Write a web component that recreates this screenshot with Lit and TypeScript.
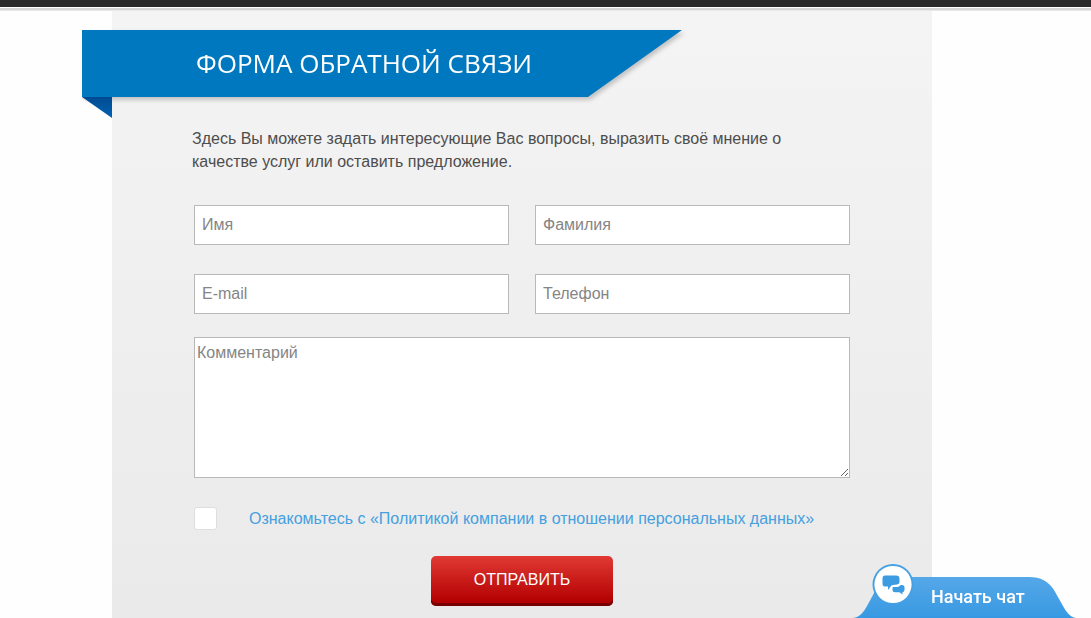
import { LitElement, html, css } from "lit";
import { customElement, state } from "lit/decorators.js";

@customElement("ribbon-title")
class RibbonTitle extends LitElement {
  static styles = css`
    :host {
      display: block;
    }
    .ribbon {
      width: 600px;
      max-width: 100%;
      filter: drop-shadow(2px 3px 2px rgba(0, 0, 0, 0.2));
    }
    .title {
      margin: 0;
      padding: 0 114px;
      background: #0078bf;
      clip-path: polygon(0 0, 100% 0, calc(100% - 94px) 100%, 0 100%);
      color: #fff;
      font: 400 26px/67px "Open Sans", sans-serif;
      white-space: nowrap;
      text-transform: uppercase;
    }
    .fold {
      width: 30px;
      height: 21px;
      background: linear-gradient(#004b92, #0062b1);
      clip-path: polygon(0 0, 100% 0, 100% 100%);
    }
  `;

  render() {
    return html`
      <div class="ribbon"><h1 class="title"><slot></slot></h1></div>
      <div class="fold"></div>
    `;
  }
}

@customElement("chat-launcher")
class ChatLauncher extends LitElement {
  static styles = css`
    :host {
      position: fixed;
      right: 15px;
      bottom: 0;
    }
    .launcher {
      position: relative;
      display: block;
      width: 224px;
      height: 56px;
      padding: 14px 0 0 79px;
      border: 0;
      background: none;
      color: #fff;
      font: 500 18px/42px Roboto, sans-serif;
      text-align: left;
      cursor: pointer;
    }
    .shape {
      position: absolute;
      inset: 0;
    }
    .label {
      position: relative;
    }
  `;

  render() {
    return html`
      <button class="launcher" type="button">
        <svg class="shape" width="224" height="56" viewBox="0 0 224 56" aria-hidden="true">
          <defs>
            <linearGradient id="tab" x1="0" y1="0" x2="0" y2="1">
              <stop offset="0" stop-color="#55a8e8" />
              <stop offset="1" stop-color="#3899e2" />
            </linearGradient>
          </defs>
          <path
            fill="url(#tab)"
            d="M1 56C8 55 11 51 15 44L21 33C25 24 31 15 44 15H177C189 15 196 19 202 28L211 44C215 51 218 55 224 56Z"
          />
          <circle cx="41" cy="22.500" r="20.500" fill="#449fe4" />
          <circle cx="41" cy="22.500" r="18.600" fill="#fff" />
          <path
            fill="#3d9be2"
            d="M33 13.500H44Q47.500 13.500 47.500 16.500V20Q47.500 22 45 22.500Q40 22.500 39 24L36 28V24.500H33Q30.500 24.500 30.500 21.500V16.500Q30.500 13.500 33 13.500Z"
          />
          <path
            fill="#3d9be2"
            d="M48.500 23H50Q52.500 23 52.500 25.500V28Q52.500 30 50.500 30.300V32.500L47.500 30.300H43Q40.500 30.300 40.500 28V26Q40.500 25 42 25Q47.500 25.500 48.500 23Z"
          />
        </svg>
        <span class="label">Начать чат</span>
      </button>
    `;
  }
}

@customElement("app-root")
class AppRoot extends LitElement {
  @state() private agreed = false;

  static styles = css`
    :host {
      display: flex;
      flex-direction: column;
      min-height: 100vh;
      background: #fefefe;
      color: #4d4d4d;
      font: 16px/23px "Liberation Sans", Arial, sans-serif;
    }
    *,
    *::before {
      box-sizing: border-box;
    }
    .topbar {
      height: 11px;
      background: linear-gradient(#2a2a2a 7px, #fff 7px, #fff 8px, #d6d6d6 8px, #d6d6d6 10px, #e9e9e9 10px);
    }
    .page {
      flex: 1;
      display: flex;
      justify-content: center;
      padding: 0 47px 0 0;
    }
    .panel {
      width: 820px;
      padding: 19px 80px 12px;
      background: linear-gradient(#f4f4f4, #eaeaea);
    }
    .heading {
      margin-left: -110px;
    }
    .intro {
      max-width: 640px;
      margin: 9px 0 32px;
    }
    .form {
      display: grid;
      grid-template-columns: 1fr 1fr;
      gap: 29px 26px;
      padding: 0 2px;
    }
    .field {
      display: block;
      width: 100%;
      margin: 0;
      border: 1px solid #b9b9b9;
      border-radius: 0;
      outline-color: #3d9be2;
      background: #fff;
      color: #4d4d4d;
      font: inherit;
    }
    .field::placeholder {
      color: #858585;
      opacity: 1;
    }
    .line {
      height: 40px;
      padding: 0 7px;
    }
    .comment {
      grid-column: 1 / -1;
      height: 141px;
      margin-top: -6px;
      padding: 3px 2px;
      resize: both;
    }
    .consent {
      grid-column: 1 / -1;
      display: flex;
      align-items: center;
      gap: 32px;
    }
    .check {
      appearance: none;
      width: 23px;
      height: 23px;
      margin: 0;
      border: 1px solid #dedede;
      border-radius: 3px;
      background: #fff;
    }
    .check:checked {
      background: #3d9be2;
      box-shadow: inset 0 0 0 4px #fff;
    }
    .policy {
      color: #45a0df;
      text-decoration: none;
    }
    .submit {
      grid-column: 1 / -1;
      justify-self: center;
      width: 182px;
      height: 50px;
      margin-top: -3px;
      padding: 0 0 3px;
      border: 0;
      border-radius: 5px;
      background: linear-gradient(#e03a35, #b30000 46px);
      box-shadow: inset 0 -3px 0 #780000;
      color: #fff;
      font: inherit;
      cursor: pointer;
    }
  `;

  private onAgree(e: Event) {
    this.agreed = (e.target as HTMLInputElement).checked;
  }

  render() {
    return html`
      <header class="topbar"></header>
      <div class="page">
        <main class="panel">
          <ribbon-title class="heading">Форма обратной связи</ribbon-title>
          <p class="intro">
            Здесь Вы можете задать интересующие Вас вопросы, выразить своё мнение о качестве услуг
            или оставить предложение.
          </p>
          <form class="form" @submit=${(e: Event) => e.preventDefault()}>
            <input class="field line" name="first" placeholder="Имя" aria-label="Имя" />
            <input class="field line" name="last" placeholder="Фамилия" aria-label="Фамилия" />
            <input class="field line" name="email" type="email" placeholder="E-mail" aria-label="E-mail" />
            <input class="field line" name="phone" type="tel" placeholder="Телефон" aria-label="Телефон" />
            <textarea class="field comment" name="comment" placeholder="Комментарий" aria-label="Комментарий"></textarea>
            <div class="consent">
              <input
                class="check"
                type="checkbox"
                aria-labelledby="policy"
                .checked=${this.agreed}
                @change=${this.onAgree}
              />
              <a class="policy" id="policy" href="#policy">Ознакомьтесь с «Политикой компании в отношении персональных данных»</a>
            </div>
            <button class="submit" type="submit">ОТПРАВИТЬ</button>
          </form>
        </main>
      </div>
      <chat-launcher></chat-launcher>
    `;
  }
}
